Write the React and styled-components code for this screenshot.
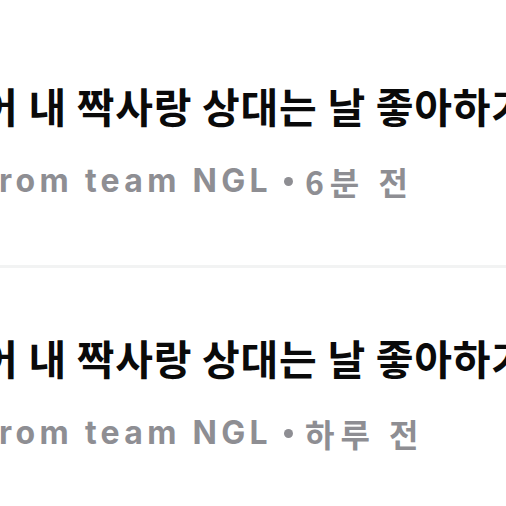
import React from "react";
import styled, { createGlobalStyle } from "styled-components";

const GlobalStyle = createGlobalStyle`
  html, body {
    margin: 0;
    padding: 0;
    background: #ffffff;
    overflow: hidden;
  }
  body {
    font-family: "Inter", "Noto Sans CJK KR", sans-serif;
    -webkit-font-smoothing: antialiased;
  }
`;

const InboxList = styled.div`
  display: flex;
  flex-direction: column;
  margin-top: 16px;
  margin-left: -20px;
  width: 780px;
`;

const MessageRow = styled.div`
  display: flex;
  flex-direction: column;
  gap: 34px;
  padding: 66px 0 65px;
  border-bottom: ${(p) => (p.$last ? "none" : "3px solid #f2f3f3")};
`;

const Preview = styled.div`
  font-family: "Noto Sans CJK KR", "Noto Sans", sans-serif;
  font-size: 41px;
  font-weight: 700;
  line-height: 46px;
  letter-spacing: 0.7px;
  color: #0a0a0a;
  white-space: nowrap;
`;

const Meta = styled.div`
  display: flex;
  align-items: center;
  gap: 12px;
  padding-left: 2px;
  font-family: "Inter", "Noto Sans CJK KR", sans-serif;
  font-size: 32px;
  font-weight: 700;
  line-height: 38px;
  letter-spacing: 4.3px;
  color: #8e8e93;
  white-space: nowrap;
`;

const Dot = styled.span`
  display: inline-block;
  width: 9px;
  height: 9px;
  border-radius: 50%;
  background: #8e8e93;
`;

const Time = styled.span`
  font-family: "Noto Sans CJK KR", sans-serif;
  font-size: 32px;
  font-weight: 700;
  letter-spacing: 6px;
`;

const messages = [
  { id: 1, text: "어 내 짝사랑 상대는 날 좋아하기는 할까?", time: "6분 전" },
  { id: 2, text: "어 내 짝사랑 상대는 날 좋아하기는 할까?", time: "하루 전" },
];

const App = () => {
  return (
    <>
      <GlobalStyle />
      <InboxList>
        {messages.map((m, i) => (
          <MessageRow key={m.id} $last={i === messages.length - 1}>
            <Preview>{m.text}</Preview>
            <Meta>
              <span>from team NGL</span>
              <Dot />
              <Time>{m.time}</Time>
            </Meta>
          </MessageRow>
        ))}
      </InboxList>
    </>
  );
};

export default App;
